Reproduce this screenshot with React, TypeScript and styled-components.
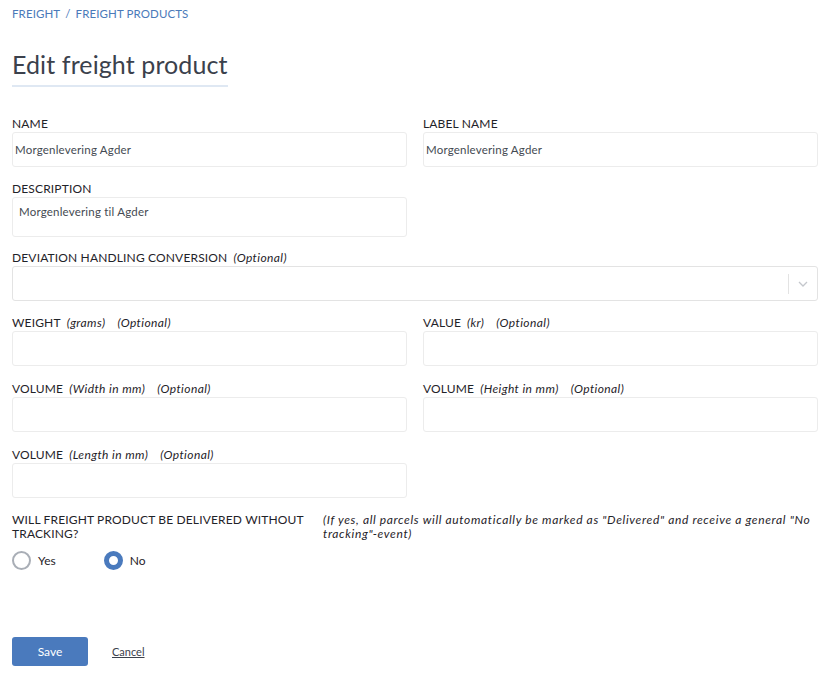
import React, { useState } from "react"
import styled, { createGlobalStyle } from "styled-components"

const GlobalStyle = createGlobalStyle`
  body {
    margin: 0;
    background: #fff;
    font-family: Lato, "Open Sans", Arial, sans-serif;
    color: #1f2329;
  }
  * { box-sizing: border-box; }
`

const App = () => {
  const [tracking, setTracking] = useState("no")

  return (
    <Page>
      <GlobalStyle />
      <Breadcrumb>
        <Crumb href="#">FREIGHT</Crumb>
        <Sep>/</Sep>
        <Crumb href="#">FREIGHT PRODUCTS</Crumb>
      </Breadcrumb>

      <Title>Edit freight product</Title>

      <Form>
        <Grid>
          <Field>
            <Label>NAME</Label>
            <Input defaultValue="Morgenlevering Agder" />
          </Field>
          <Field>
            <Label>LABEL NAME</Label>
            <Input defaultValue="Morgenlevering Agder" />
          </Field>
          <Field>
            <Label>DESCRIPTION</Label>
            <TextArea defaultValue="Morgenlevering til Agder" />
          </Field>
          <div />
        </Grid>

        <Field>
          <Label>
            DEVIATION HANDLING CONVERSION<Opt>(Optional)</Opt>
          </Label>
          <Select>
            <SelectValue />
            <Indicator>
              <IndSep />
              <svg width="10" height="6" viewBox="0 0 10 6" fill="none">
                <path d="M1 1l4 4 4-4" stroke="#c4c7cc" strokeWidth="1.3" />
              </svg>
            </Indicator>
          </Select>
        </Field>

        <Grid $loose>
          <Field>
            <Label>
              WEIGHT<Opt>(grams)</Opt>
              <Opt $wide>(Optional)</Opt>
            </Label>
            <Input />
          </Field>
          <Field>
            <Label>
              VALUE<Opt>(kr)</Opt>
              <Opt $wide>(Optional)</Opt>
            </Label>
            <Input />
          </Field>
          <Field>
            <Label>
              VOLUME<Opt>(Width in mm)</Opt>
              <Opt $wide>(Optional)</Opt>
            </Label>
            <Input />
          </Field>
          <Field>
            <Label>
              VOLUME<Opt>(Height in mm)</Opt>
              <Opt $wide>(Optional)</Opt>
            </Label>
            <Input />
          </Field>
          <Field>
            <Label>
              VOLUME<Opt>(Length in mm)</Opt>
              <Opt $wide>(Optional)</Opt>
            </Label>
            <Input />
          </Field>
          <div />
        </Grid>

        <TrackingBlock>
          <Question>
            <QuestionText>WILL FREIGHT PRODUCT BE DELIVERED WITHOUT TRACKING?</QuestionText>
            <Hint>
              (If yes, all parcels will automatically be marked as "Delivered" and receive a general "No
              <br />
              tracking"-event)
            </Hint>
          </Question>

          <Radios>
            <RadioLabel onClick={() => setTracking("yes")}>
              <Radio $checked={tracking === "yes"} />
              Yes
            </RadioLabel>
            <RadioLabel onClick={() => setTracking("no")}>
              <Radio $checked={tracking === "no"} />
              No
            </RadioLabel>
          </Radios>
        </TrackingBlock>
      </Form>

      <Actions>
        <SaveButton>Save</SaveButton>
        <CancelLink href="#">Cancel</CancelLink>
      </Actions>
    </Page>
  )
}

export default App

const Page = styled.div`
  padding: 6px 20px 0 12px;
  width: 838px;
`

const Breadcrumb = styled.div`
  display: flex;
  align-items: center;
  gap: 5px;
  font-size: 11.5px;
  height: 14px;
  letter-spacing: 0.1px;
`

const Crumb = styled.a`
  color: #4a7ab9;
  text-decoration: none;
`

const Sep = styled.span`
  color: #4a7ab9;
`

const Title = styled.h1`
  display: inline-block;
  margin: 29px 0 0;
  padding-bottom: 6px;
  font-size: 25px;
  font-weight: 400;
  color: #3b414c;
  border-bottom: 2px solid #dfe8f3;
  letter-spacing: 0.1px;
`

const Form = styled.div`
  display: flex;
  flex-direction: column;
  gap: 14px;
  margin-top: 30px;
`

const Grid = styled.div<{ $loose?: boolean }>`
  display: grid;
  grid-template-columns: 1fr 1fr;
  column-gap: 16px;
  row-gap: ${(p) => (p.$loose ? "16px" : "15px")};
  margin-top: ${(p) => (p.$loose ? "1px" : "0")};
`

const Field = styled.div`
  display: flex;
  flex-direction: column;
  gap: 1px;
`

const Label = styled.label`
  font-size: 12px;
  line-height: 14px;
  color: #1f2329;
  letter-spacing: 0.15px;
  white-space: pre;
`

const Opt = styled.i<{ $wide?: boolean }>`
  margin-left: ${(p) => (p.$wide ? "12px" : "6px")};
  font-size: 12px;
  letter-spacing: 0.4px;
`

const Input = styled.input`
  height: 35px;
  margin: 0;
  border: 1px solid #ececec;
  border-radius: 3px;
  padding: 0 2px;
  font-family: inherit;
  font-size: 11.5px;
  letter-spacing: 0.2px;
  color: #444a52;
  outline: none;
`

const TextArea = styled.textarea`
  height: 40px;
  margin: 0;
  border: 1px solid #ececec;
  border-radius: 3px;
  padding: 7px 6px;
  font-family: inherit;
  font-size: 11.5px;
  letter-spacing: 0.2px;
  color: #444a52;
  resize: none;
  outline: none;
`

const Select = styled.div`
  display: flex;
  align-items: center;
  height: 35px;
  border: 1px solid #e3e3e3;
  border-radius: 3px;
`

const SelectValue = styled.div`
  flex: 1;
`

const Indicator = styled.div`
  display: flex;
  align-items: center;
  gap: 9px;
  padding-right: 9px;
`

const IndSep = styled.span`
  width: 1px;
  height: 20px;
  background: #e3e3e3;
`

const TrackingBlock = styled.div`
  display: flex;
  flex-direction: column;
  gap: 11px;
  margin-top: 1px;
`

const Question = styled.div`
  display: grid;
  grid-template-columns: 296px 1fr;
  column-gap: 15px;
`

const QuestionText = styled.div`
  font-size: 12px;
  line-height: 13.5px;
  letter-spacing: 0.15px;
  color: #1f2329;
`

const Hint = styled.i`
  font-size: 12px;
  line-height: 13.5px;
  letter-spacing: 0.65px;
  white-space: nowrap;
  color: #1f2329;
`

const Radios = styled.div`
  display: flex;
  gap: 48px;
`

const RadioLabel = styled.label`
  display: flex;
  align-items: center;
  gap: 7px;
  font-size: 12px;
  color: #1f2329;
  cursor: pointer;
`

const Radio = styled.span<{ $checked: boolean }>`
  width: 19px;
  height: 19px;
  border-radius: 50%;
  border: ${(p) => (p.$checked ? "5px solid #4a7abd" : "2.5px solid #a9aeb6")};
  background: #fff;
`

const Actions = styled.div`
  display: flex;
  align-items: center;
  gap: 24px;
  margin-top: 67px;
`

const SaveButton = styled.button`
  width: 76px;
  height: 29px;
  background: #4a7abd;
  border: none;
  border-radius: 3px;
  color: #fff;
  font-family: inherit;
  font-size: 12px;
`

const CancelLink = styled.a`
  color: #3b414c;
  font-size: 11px;
  text-decoration: underline;
`
